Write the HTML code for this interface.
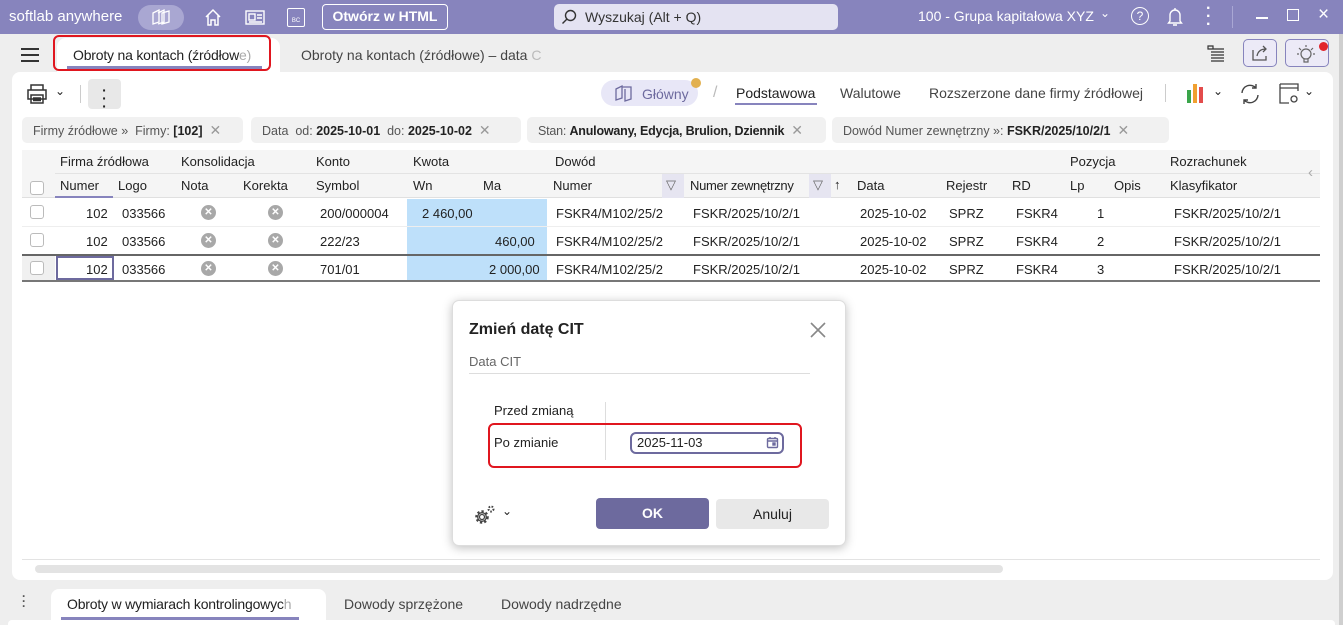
<!DOCTYPE html>
<html><head><meta charset="utf-8">
<style>
*{box-sizing:border-box;margin:0;padding:0}
body{width:1343px;height:625px;overflow:hidden;background:#eeeeee;font-family:"Liberation Sans",sans-serif;font-size:13px;color:#222;position:relative}
.a{position:absolute}
.top{left:0;top:0;width:1343px;height:34px;background:#8784bd;color:#fff}
.chip{position:absolute;top:117px;height:26px;background:#f1f1f1;border-radius:5px;font-size:12.5px;color:#555;line-height:26px;padding-left:11px;white-space:nowrap;overflow:hidden}
.chip b{color:#222;font-weight:bold}
.chip .x{color:#999;margin-left:7px;font-size:14px}
.h{position:absolute;font-size:13px;color:#222;white-space:nowrap}
.cell{position:absolute;font-size:13px;white-space:nowrap}
.cb{position:absolute;width:14px;height:14px;border:1px solid #bbb;border-radius:3px;background:#fff}
.xi{position:absolute;width:15px;height:15px;border-radius:50%;background:#a8a8a8;color:#fff;font-size:10px;line-height:15px;text-align:center;font-weight:bold}
</style></head><body>
<div class="a top">
  <div class="a" style="left:9px;top:8px;font-size:15px;color:#fff">softlab anywhere</div>
  <div class="a" style="left:138px;top:5px;width:46px;height:25px;border-radius:13px;background:#a9a7d2"></div>
  <svg class="a" style="left:150px;top:8px" width="22" height="18" viewBox="0 0 22 18" fill="none" stroke="#fff" stroke-width="1.3"><path d="M3 5 L9 2 L9 14 L3 16Z M8 5 L14 2 L14 14 L8 16 M12 5 L19 3 L19 14 L12 16Z"/></svg>
  <svg class="a" style="left:203px;top:8px" width="20" height="19" viewBox="0 0 20 19" fill="none" stroke="#fff" stroke-width="1.5"><path d="M3 9 L10 2 L17 9 M5 7 V17 H8 V12 H12 V17 H15 V7"/></svg>
  <svg class="a" style="left:244px;top:9px" width="22" height="17" viewBox="0 0 22 17" fill="none" stroke="#fff" stroke-width="1.4"><rect x="2" y="2" width="18" height="13"/><rect x="5" y="5" width="6" height="6"/><path d="M13 6h5M13 9h5M5 13h13"/></svg>
  <div class="a" style="left:287px;top:8px;width:18px;height:19px;border:1.4px solid #fff;border-radius:2px;font-size:6px;line-height:24px;text-align:center">BC</div>
  <div class="a" style="left:322px;top:4px;width:126px;height:26px;border:1.5px solid #fff;border-radius:4px;text-align:center;line-height:23px;font-weight:bold;font-size:14px">Otwórz w HTML</div>
  <div class="a" style="left:554px;top:4px;width:284px;height:26px;background:#e4e3f2;border-radius:5px;color:#333;font-size:14px;line-height:26px;padding-left:31px">Wyszukaj (Alt + Q)
    <svg class="a" style="left:7px;top:5px" width="16" height="16" viewBox="0 0 16 16" fill="none" stroke="#333" stroke-width="1.4"><circle cx="9.5" cy="6.5" r="5"/><path d="M6 10 L1.5 14.5"/></svg></div>
  <div class="a" style="left:918px;top:8px;font-size:14px">100 - Grupa kapitałowa XYZ</div>
  <div class="a" style="left:1100px;top:6px;font-size:12px">⌄</div>
  <div class="a" style="left:1131px;top:7px;width:18px;height:18px;border:1.4px solid #fff;border-radius:50%;text-align:center;font-size:12px;line-height:16px">?</div>
  <svg class="a" style="left:1166px;top:6px" width="18" height="22" viewBox="0 0 18 22" fill="none" stroke="#fff" stroke-width="1.4"><path d="M4 15 V9 a5 5 0 0 1 10 0 V15 L15.5 17 H2.5Z M9 2v2 M7 19h4"/></svg>
  <div class="a" style="left:1206px;top:5px;font-size:16px;font-weight:bold;line-height:8px">·<br>·<br>·</div>
  <div class="a" style="left:1232px;top:6px;width:1px;height:22px;background:#a9a7d4"></div>
  <div class="a" style="left:1256px;top:17px;width:12px;height:1.5px;background:#fff"></div>
  <div class="a" style="left:1287px;top:9px;width:12px;height:12px;border:1.5px solid #fff"></div>
  <div class="a" style="left:1318px;top:4px;font-size:19px">×</div>
</div>
<!-- tabs row -->
<svg class="a" style="left:20px;top:47px" width="20" height="16"><path d="M1 2h18M1 8h18M1 14h18" stroke="#333" stroke-width="2"/></svg>
<div class="a" style="left:57px;top:38px;width:223px;height:36px;background:#fff;border-radius:9px 9px 0 0"></div>
<div class="a" style="left:73px;top:47px;font-size:14px;color:#222;letter-spacing:-0.2px">Obroty na kontach (źródłow<span style="color:#aaa">e)</span></div>
<div class="a" style="left:67px;top:66px;width:195px;height:3px;background:#8784bd"></div>
<div class="a" style="left:53px;top:35px;width:218px;height:36px;border:2px solid #e0161f;border-radius:6px"></div>
<div class="a" style="left:301px;top:47px;font-size:14px;color:#444">Obroty na kontach (źródłowe) – data <span style="color:#bbb">C</span></div>
<svg class="a" style="left:1206px;top:44px" width="20" height="20" fill="none" stroke="#333" stroke-width="1.2"><path d="M2 2h5v3H2z M7 5h11 M5 8h13 M5 11h13 M5 14h13 M5 17h13"/></svg>
<div class="a" style="left:1243px;top:39px;width:34px;height:28px;border:1.5px solid #8784bd;border-radius:5px;background:#eceaf7"></div>
<svg class="a" style="left:1250px;top:44px" width="20" height="18" fill="none" stroke="#555" stroke-width="1.3"><path d="M3 6v10h13v-4 M7 12c1-5 4-7 9-7 M13 2l3 3-3 3"/></svg>
<div class="a" style="left:1285px;top:39px;width:44px;height:28px;border:1.5px solid #8784bd;border-radius:5px;background:#eceaf7"></div>
<svg class="a" style="left:1296px;top:43px" width="20" height="20" fill="none" stroke="#666" stroke-width="1.2"><circle cx="10" cy="11" r="5"/><path d="M8 16v3h4v-3 M10 2v2 M3 5l2 2 M17 5l-2 2 M1 11h2 M17 11h2"/></svg>
<div class="a" style="left:1319px;top:42px;width:9px;height:9px;border-radius:50%;background:#e2242b"></div>
<!-- main panel -->
<div class="a" style="left:12px;top:72px;width:1321px;height:508px;background:#fff;border-radius:8px"></div>
<svg class="a" style="left:25px;top:82px" width="24" height="24" fill="none" stroke="#333" stroke-width="1.5"><path d="M6 8V3h12v5 M3 8h18v9H3z M6 13h12v8H6z M8 16h8M8 18.5h8"/></svg>
<div class="a" style="left:55px;top:84px;font-size:12px">⌄</div>
<div class="a" style="left:80px;top:85px;width:1px;height:18px;background:#ccc"></div>
<div class="a" style="left:88px;top:79px;width:33px;height:30px;background:#e8e8e8;border-radius:4px;text-align:center;font-weight:bold;line-height:8px;padding-top:7px;font-size:14px">·<br>·<br>·</div>
<div class="a" style="left:601px;top:80px;width:97px;height:26px;border-radius:13px;background:#e8e7f7"></div>
<svg class="a" style="left:613px;top:84px" width="22" height="18" fill="none" stroke="#6d6a9e" stroke-width="1.3"><path d="M3 5 L9 2 L9 14 L3 16Z M9 3h9v12l-6 2V5"/></svg>
<div class="a" style="left:642px;top:86px;font-size:14px;color:#6d6a9e">Główny</div>
<div class="a" style="left:691px;top:78px;width:10px;height:10px;border-radius:50%;background:#e2b04f"></div>
<div class="a" style="left:713px;top:84px;font-size:16px;color:#bbb">/</div>
<div class="a" style="left:736px;top:85px;font-size:14px;color:#222">Podstawowa</div>
<div class="a" style="left:735px;top:103px;width:82px;height:2px;background:#8784bd"></div>
<div class="a" style="left:840px;top:85px;font-size:14px;color:#444">Walutowe</div>
<div class="a" style="left:929px;top:85px;font-size:14px;color:#444">Rozszerzone dane firmy źródłowej</div>
<div class="a" style="left:1165px;top:84px;width:1px;height:18px;background:#ccc"></div>
<div class="a" style="left:1187px;top:90px;width:4px;height:13px;background:#3aa54a"></div>
<div class="a" style="left:1193px;top:84px;width:4px;height:19px;background:#f0a030"></div>
<div class="a" style="left:1199px;top:87px;width:4px;height:16px;background:#e34b4b"></div>
<div class="a" style="left:1213px;top:84px;font-size:12px">⌄</div>
<svg class="a" style="left:1238px;top:82px" width="24" height="24" fill="none" stroke="#444" stroke-width="1.4"><path d="M4 11a8 8 0 0 1 14-5 M20 13a8 8 0 0 1-14 5 M18 2v4h-4 M6 22v-4h4"/></svg>
<svg class="a" style="left:1278px;top:82px" width="24" height="24" fill="none" stroke="#444" stroke-width="1.3"><path d="M2 2h18v7 M2 2v19h9 M2 6h18"/><circle cx="16" cy="17" r="3"/></svg>
<div class="a" style="left:1304px;top:84px;font-size:12px">⌄</div>
<!-- chips -->
<div class="chip" style="left:22px;width:221px">Firmy źródłowe » &nbsp;Firmy: <b>[102]</b><span class="x">✕</span></div>
<div class="chip" style="left:251px;width:270px">Data &nbsp;od: <b>2025-10-01</b> &nbsp;do: <b>2025-10-02</b><span class="x">✕</span></div>
<div class="chip" style="left:527px;width:299px;letter-spacing:-0.2px">Stan: <b>Anulowany, Edycja, Brulion, Dziennik</b><span class="x">✕</span></div>
<div class="chip" style="left:832px;width:337px">Dowód Numer zewnętrzny »: <b>FSKR/2025/10/2/1</b><span class="x">✕</span></div>
<!-- grid header -->
<div class="a" style="left:22px;top:150px;width:1298px;height:48px;background:#f5f5f5;border-bottom:1px solid #e0e0e0"></div>
<div class="a" style="left:55px;top:173px;width:1265px;height:1px;background:#e3e3e3"></div>
<div class="h" style="left:60px;top:154px">Firma źródłowa</div>
<div class="h" style="left:181px;top:154px">Konsolidacja</div>
<div class="h" style="left:316px;top:154px">Konto</div>
<div class="h" style="left:413px;top:154px">Kwota</div>
<div class="h" style="left:555px;top:154px">Dowód</div>
<div class="h" style="left:1070px;top:154px">Pozycja</div>
<div class="h" style="left:1170px;top:154px">Rozrachunek</div>
<div class="cb" style="left:30px;top:181px"></div>
<div class="h" style="left:60px;top:178px">Numer</div>
<div class="a" style="left:55px;top:196px;width:58px;height:2px;background:#8784bd"></div>
<div class="h" style="left:118px;top:178px">Logo</div>
<div class="h" style="left:181px;top:178px">Nota</div>
<div class="h" style="left:243px;top:178px">Korekta</div>
<div class="h" style="left:316px;top:178px">Symbol</div>
<div class="h" style="left:413px;top:178px">Wn</div>
<div class="h" style="left:483px;top:178px">Ma</div>
<div class="h" style="left:553px;top:178px">Numer</div>
<div class="a" style="left:662px;top:174px;width:22px;height:24px;background:#e6e5f1"></div>
<div class="h" style="left:666px;top:177px;color:#666">▽</div>
<div class="h" style="left:690px;top:178px;letter-spacing:-0.3px">Numer zewnętrzny</div>
<div class="a" style="left:809px;top:174px;width:22px;height:24px;background:#e6e5f1"></div>
<div class="h" style="left:813px;top:177px;color:#666">▽</div>
<div class="h" style="left:834px;top:177px">↑</div>
<div class="h" style="left:857px;top:178px">Data</div>
<div class="h" style="left:946px;top:178px">Rejestr</div>
<div class="h" style="left:1012px;top:178px">RD</div>
<div class="h" style="left:1070px;top:178px">Lp</div>
<div class="h" style="left:1114px;top:178px">Opis</div>
<div class="h" style="left:1170px;top:178px">Klasyfikator</div>
<div class="h" style="left:1308px;top:164px;color:#aaa;font-size:15px">‹</div>
<!-- rows -->
<div class="a" style="left:407px;top:199px;width:140px;height:83px;background:#bee0fa"></div>
<div class="a" style="left:22px;top:226px;width:1298px;height:1px;background:#eee"></div>
<div class="a" style="left:22px;top:254px;width:1298px;height:28px;border-top:2px solid #666;border-bottom:2px solid #777"></div>
<div class="a" style="left:22px;top:256px;width:33px;height:24px;background:#f0f0f0"></div>
<div class="a" style="left:56px;top:256px;width:58px;height:24px;border:2px solid #6d6a9e;background:#fff"></div>

<div class="cb" style="left:30px;top:205px"></div>
<div class="cb" style="left:30px;top:233px"></div>
<div class="cb" style="left:30px;top:261px"></div>
<div class="cell" style="left:86px;top:206px">102</div>
<div class="cell" style="left:86px;top:234px">102</div>
<div class="cell" style="left:86px;top:262px">102</div>
<div class="cell" style="left:122px;top:206px">033566</div>
<div class="cell" style="left:122px;top:234px">033566</div>
<div class="cell" style="left:122px;top:262px">033566</div>
<div class="xi" style="left:201px;top:205px">✕</div><div class="xi" style="left:268px;top:205px">✕</div>
<div class="xi" style="left:201px;top:233px">✕</div><div class="xi" style="left:268px;top:233px">✕</div>
<div class="xi" style="left:201px;top:261px">✕</div><div class="xi" style="left:268px;top:261px">✕</div>
<div class="cell" style="left:320px;top:206px">200/000004</div>
<div class="cell" style="left:320px;top:234px">222/23</div>
<div class="cell" style="left:320px;top:262px">701/01</div>
<div class="cell" style="left:422px;top:206px">2 460,00</div>
<div class="cell" style="left:495px;top:234px">460,00</div>
<div class="cell" style="left:489px;top:262px">2 000,00</div>
<div class="cell" style="left:556px;top:206px">FSKR4/M102/25/2</div>
<div class="cell" style="left:556px;top:234px">FSKR4/M102/25/2</div>
<div class="cell" style="left:556px;top:262px">FSKR4/M102/25/2</div>
<div class="cell" style="left:693px;top:206px">FSKR/2025/10/2/1</div>
<div class="cell" style="left:693px;top:234px">FSKR/2025/10/2/1</div>
<div class="cell" style="left:693px;top:262px">FSKR/2025/10/2/1</div>
<div class="cell" style="left:860px;top:206px">2025-10-02</div>
<div class="cell" style="left:860px;top:234px">2025-10-02</div>
<div class="cell" style="left:860px;top:262px">2025-10-02</div>
<div class="cell" style="left:949px;top:206px">SPRZ</div><div class="cell" style="left:949px;top:234px">SPRZ</div><div class="cell" style="left:949px;top:262px">SPRZ</div>
<div class="cell" style="left:1016px;top:206px">FSKR4</div><div class="cell" style="left:1016px;top:234px">FSKR4</div><div class="cell" style="left:1016px;top:262px">FSKR4</div>
<div class="cell" style="left:1097px;top:206px">1</div><div class="cell" style="left:1097px;top:234px">2</div><div class="cell" style="left:1097px;top:262px">3</div>
<div class="cell" style="left:1174px;top:206px">FSKR/2025/10/2/1</div>
<div class="cell" style="left:1174px;top:234px">FSKR/2025/10/2/1</div>
<div class="cell" style="left:1174px;top:262px">FSKR/2025/10/2/1</div>
<!-- scrollbar -->
<div class="a" style="left:22px;top:559px;width:1298px;height:1px;background:#e3e3e3"></div>
<div class="a" style="left:35px;top:565px;width:968px;height:8px;border-radius:4px;background:#e3e3e3"></div>
<!-- bottom tabs -->
<div class="a" style="left:22px;top:594px;font-weight:bold;line-height:5px;font-size:12px;color:#555">·<br>·<br>·</div>
<div class="a" style="left:51px;top:589px;width:275px;height:36px;background:#fff;border-radius:8px 8px 0 0"></div>
<div class="a" style="left:67px;top:596px;font-size:14px;letter-spacing:-0.2px">Obroty w wymiarach kontrolingowyc<span style="color:#aaa">h</span></div>
<div class="a" style="left:61px;top:617px;width:238px;height:3px;background:#8784bd"></div>
<div class="a" style="left:344px;top:596px;font-size:14px;color:#444">Dowody sprzężone</div>
<div class="a" style="left:501px;top:596px;font-size:14px;color:#444">Dowody nadrzędne</div>
<div class="a" style="left:8px;top:620px;width:1327px;height:5px;background:#fff;border-radius:4px 4px 0 0"></div>
<div class="a" style="left:1339px;top:34px;width:4px;height:591px;background:#cfcfcf"></div>
<!-- dialog -->
<div class="a" style="left:452px;top:300px;width:394px;height:246px;background:#fff;border:1px solid #ddd;border-radius:7px;box-shadow:0 2px 10px rgba(0,0,0,.25)"></div>
<div class="a" style="left:469px;top:321px;font-size:16px;font-weight:bold;color:#222">Zmień datę CIT</div>
<svg class="a" style="left:809px;top:321px" width="18" height="18"><path d="M2 2L16 16M16 2L2 16" stroke="#888" stroke-width="1.6"/></svg>
<div class="a" style="left:469px;top:354px;font-size:13px;color:#666">Data CIT</div>
<div class="a" style="left:469px;top:373px;width:341px;height:1px;background:#ddd"></div>
<div class="a" style="left:605px;top:402px;width:1px;height:58px;background:#ddd"></div>
<div class="a" style="left:494px;top:403px;font-size:13px">Przed zmianą</div>
<div class="a" style="left:494px;top:435px;font-size:13px">Po zmianie</div>
<div class="a" style="left:630px;top:432px;width:154px;height:22px;border:2px solid #6d6a9e;border-radius:6px;padding-left:5px;line-height:18px;font-size:13px">2025-11-03</div>
<svg class="a" style="left:766px;top:436px" width="13" height="13" fill="none" stroke="#6d6a9e" stroke-width="1.4"><rect x="1.5" y="2.5" width="10" height="9" rx="1"/><path d="M1.5 5h10M4 1v2M9 1v2"/><rect x="7" y="7" width="2" height="2" fill="#6d6a9e"/></svg>
<div class="a" style="left:488px;top:423px;width:314px;height:45px;border:2px solid #e0161f;border-radius:6px"></div>
<svg class="a" style="left:472px;top:503px" width="26" height="24" fill="none" stroke="#444" stroke-width="1.3"><circle cx="10" cy="14" r="2.5"/><circle cx="10" cy="14" r="5.5" stroke-width="2.5" stroke-dasharray="2.2 2"/><circle cx="10" cy="14" r="4.3"/><circle cx="19" cy="6" r="2.5" stroke-width="2" stroke-dasharray="1.6 1.4"/></svg>
<div class="a" style="left:502px;top:504px;font-size:12px">⌄</div>
<div class="a" style="left:596px;top:498px;width:113px;height:31px;background:#6d6a9e;border-radius:4px;color:#fff;text-align:center;line-height:31px;font-size:14px;font-weight:bold">OK</div>
<div class="a" style="left:716px;top:499px;width:113px;height:30px;background:#e8e8e8;border-radius:4px;text-align:center;line-height:30px;font-size:14px">Anuluj</div>
</body></html>
